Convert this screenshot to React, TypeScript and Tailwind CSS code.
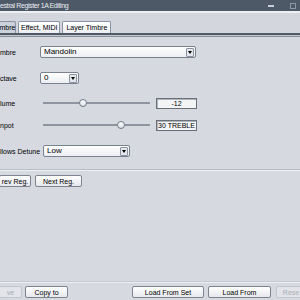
import React from "react"

function Combo({ value, width }: { value: string; width: string }) {
    return (
        <div className={`${width} h-[12px] shrink-0 flex items-center justify-between border border-[#7a8290] rounded-[2px] bg-gradient-to-b from-white to-[#eceef2] pl-[3px] pr-[1px]`}>
            <span className="text-[8px] leading-none text-black whitespace-nowrap">{value}</span>
            <div className="w-[8px] h-[9px] flex items-center justify-center border border-[#8a92a0] rounded-[1px] bg-[#e4e7ee]">
                <div className="w-0 h-0 border-l-[2px] border-r-[2px] border-t-[3px] border-l-transparent border-r-transparent border-t-black" />
            </div>
        </div>
    )
}

function Slider({ pos }: { pos: string }) {
    return (
        <div className="w-[107px] h-[10px] shrink-0 flex items-center">
            <div className={`${pos} h-[2px] bg-[#8e95a0]`} />
            <div className="w-[8px] h-[8px] rounded-full border border-[#6f7785] bg-gradient-to-b from-white to-[#dde1e8] shrink-0" />
            <div className="flex-1 h-[2px] bg-[#8e95a0]" />
        </div>
    )
}

function ValueBox({ text }: { text: string }) {
    return (
        <div className="w-[41px] h-[11px] flex items-center justify-center border border-[#6a707a] bg-[#f3f4f6] shadow-[inset_1px_1px_0_#b0b5bd]">
            <span className="text-[7px] leading-none text-black whitespace-nowrap">{text}</span>
        </div>
    )
}

function Btn({ text, width, disabled }: { text: string; width: string; disabled?: boolean }) {
    return (
        <div className={`${width} h-[12px] shrink-0 flex items-center justify-center rounded-[2px] border ${disabled ? 'border-[#c2c6cd] bg-[#e2e4e9] text-[#a9adb5]' : 'border-[#7d8490] bg-gradient-to-b from-white to-[#e6e8ed] text-black'}`}>
            <span className="text-[7px] leading-none whitespace-nowrap">{text}</span>
        </div>
    )
}

function Label({ text, width }: { text: string; width: string }) {
    return <span className={`${width} shrink-0 text-[7px] leading-none text-black whitespace-nowrap`}>{text}</span>
}

export default function App() {
    return (
        <div className="w-[300px] h-[300px] overflow-hidden bg-[#d6d9e0] flex flex-col" style={{ fontFamily: '"Liberation Sans", Arial, sans-serif' }}>

            {/* TITLE BAR */}
            <div className="h-[11px] bg-[#4e5967] flex items-center justify-between shrink-0">
                <span className="text-[7px] tracking-[-0.4px] leading-none text-[#e8ebf0] whitespace-nowrap">estral Register 1A Editing</span>
                <div className="flex items-center gap-[16px] pr-[4px]">
                    <div className="w-[6px] h-[2px] bg-[#c9ced6]" />
                    <div className="w-[6px] h-[6px] border border-[#8f97a3]" />
                </div>
            </div>
            <div className="h-[2px] bg-[#eef0f4] shrink-0" />

            {/* TABS */}
            <div className="h-[20px] bg-[#d3d6dd] flex items-end shrink-0">
                <div className="flex items-end gap-[2px] -ml-[1px]">
                    <div className="w-[17px] h-[12px] flex items-center justify-center bg-[#cbd2dc] border border-[#8a93a2] border-b-0 rounded-t-[2px]">
                        <span className="text-[7px] leading-none text-black">mbre</span>
                    </div>
                    <div className="h-[12px] px-[2px] flex items-center justify-center bg-gradient-to-b from-white to-[#eceef2] border border-[#8a93a2] border-b-0 rounded-t-[2px]">
                        <span className="text-[7px] leading-none text-black whitespace-nowrap">Effect, MIDI</span>
                    </div>
                    <div className="h-[12px] px-[3px] flex items-center justify-center bg-gradient-to-b from-white to-[#eceef2] border border-[#8a93a2] border-b-0 rounded-t-[2px]">
                        <span className="text-[7px] leading-none text-black whitespace-nowrap">Layer Timbre</span>
                    </div>
                </div>
            </div>
            <div className="h-[2px] bg-[#515967] shrink-0" />
            <div className="h-[1px] bg-[#c2c6ce] shrink-0" />
            <div className="h-[1px] bg-[#8a909a] shrink-0" />

            {/* CONTENT */}
            <div className="flex-1 flex flex-col">
                <div className="flex items-center mt-[9px] h-[12px]">
                    <Label text="mbre" width="w-[40px]" />
                    <Combo value="Mandolin" width="w-[156px]" />
                </div>
                <div className="flex items-center mt-[14px] h-[12px]">
                    <Label text="ctave" width="w-[40px]" />
                    <Combo value="0" width="w-[39px]" />
                </div>
                <div className="flex items-center mt-[13px] h-[12px]">
                    <Label text="lume" width="w-[43px]" />
                    <Slider pos="w-[36px]" />
                    <div className="ml-[6px]"><ValueBox text="-12" /></div>
                </div>
                <div className="flex items-center mt-[10px] h-[12px]">
                    <Label text="npot" width="w-[43px]" />
                    <Slider pos="w-[74px]" />
                    <div className="ml-[6px]"><ValueBox text="30 TREBLE" /></div>
                </div>
                <div className="flex items-center mt-[14px] h-[12px]">
                    <Label text="llows Detune" width="w-[43px]" />
                    <Combo value="Low" width="w-[87px]" />
                </div>

                <div className="mt-[12px] h-[1px] bg-[#b9bdc5]" />
                <div className="h-[1px] bg-[#eef0f3]" />

                <div className="flex gap-[4px] mt-[4px]">
                    <Btn text="rev Reg." width="w-[32px] -ml-[1px]" />
                    <Btn text="Next Reg." width="w-[47px]" />
                </div>

                <div className="flex-1" />
                <div className="h-[1px] bg-[#c4c8cf]" />
                <div className="h-[1px] bg-[#eceef2]" />

                <div className="flex items-center mt-[3px] mb-[2px]">
                    <Btn text="ve" width="w-[23px] -ml-[1px]" disabled />
                    <div className="ml-[3px]"><Btn text="Copy to" width="w-[43px]" /></div>
                    <div className="ml-[64px]"><Btn text="Load From Set" width="w-[72px]" /></div>
                    <div className="ml-[4px]"><Btn text="Load From" width="w-[63px]" /></div>
                    <div className="ml-[5px]"><Btn text="Rese" width="w-[30px]" disabled /></div>
                </div>
            </div>
        </div>
    )
}
